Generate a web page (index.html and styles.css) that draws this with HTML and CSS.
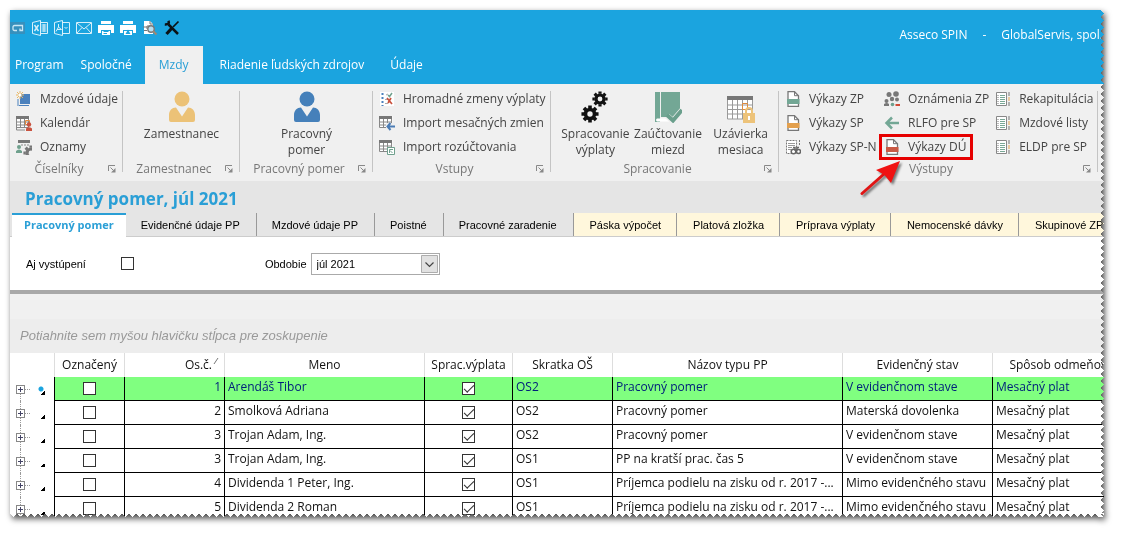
FILE: index.html
```html
<!DOCTYPE html>
<html lang="sk">
<head>
<meta charset="utf-8">
<title>Asseco SPIN</title>
<link rel="stylesheet" href="styles.css">
</head>
<body>
<svg class="defs" aria-hidden="true">
  <symbol id="doc" viewBox="0 0 16 16"><path d="M3 .7h6.500l4 4v10.600H3z" fill="#fff" stroke="#777" stroke-width="1.300"/><path d="M9.500.7v4h4" fill="none" stroke="#777"/><path d="M2 8h12.500v5H2z" fill="currentColor"/></symbol>
  <symbol id="list" viewBox="0 0 16 16"><path d="M1.500 1.500h10v13h-10z" fill="#fff" stroke="#888"/><path d="M5 4.500h5M5 6.500h5M5 8.500h5M5 10.500h5M5 12.500h5" stroke="#79a896"/><path d="M3 4v9" stroke="#777" stroke-dasharray="1 1"/><path d="M14 1v4" stroke="#777"/><path d="M14 6v4" stroke="#e8a34c"/><path d="M14 11v4" stroke="#777"/></symbol>
  <symbol id="launch" viewBox="0 0 8 8"><path d="M.5 6V.5H7" fill="none" stroke="#888"/><path d="M2.500 2.500l3 3" stroke="#888"/><path d="M7.500 3v4.500H3z" fill="#888"/></symbol>
  <symbol id="sheet" viewBox="0 0 16 16"><path d="M.5 1h13v12H.5z" fill="#fff"/><path d="M0 1h13v3H0z" fill="#777"/><path d="M.5 4v8.500h12V4M0 7h13M0 10h13M4.500 4v9M8.500 4v9" fill="none" stroke="#888"/></symbol>
  <symbol id="person" viewBox="0 0 28 32"><circle cx="14" cy="8" r="7.500"/><path d="M8 16.500l6 9 6-9c4 0 7 3 7 7.500V29q0 2-2 2H3q-2 0-2-2v-5c0-4.500 3-7.500 7-7.500z"/></symbol>
  <symbol id="gear" viewBox="-10 -10 20 20"><circle r="5" fill="none" stroke="currentColor" stroke-width="4"/><path d="M0-6.500V-9.500M0 6.500V9.500M-6.500 0H-9.500M6.500 0H9.500M-4.600-4.600l-2.100-2.100M4.600 4.600l2.100 2.100M-4.600 4.600l-2.100 2.100M4.600-4.600l2.100-2.100" stroke="currentColor" stroke-width="4"/></symbol>
  <symbol id="printer" viewBox="0 0 16 16"><path d="M3 1h10v3H3zM0 5h16v8h-3v-3H3v3H0z" fill="#fff"/><path d="M4 11h8v4H4z" fill="#fff"/></symbol>
</svg>

<div class="shadow">
<div class="window">
  <header class="top">
    <div class="titlebar">
      <div class="quick">
        <button aria-label="Aplikácia"><svg viewBox="0 0 16 16"><path d="M0 2h15v12H0z" fill="#3690bd"/><path d="M7 10.500H4.500Q3 10.500 3 9V7Q3 5.500 4.500 5.500h8v5H10V8.500" fill="none" stroke="#c9e7f5" stroke-width="1.300"/></svg></button>
        <button aria-label="Export do Excelu"><svg viewBox="0 0 16 16" fill="none" stroke="#d8f0fa"><path d="M.5 2.500l8-2v15l-8-2zM8.500 2.500h7v11h-7"/><path d="M2.500 5l4 6M6.500 5l-4 6" stroke-width="1.400"/><path d="M9.500 5h5M9.500 7h5M9.500 9h5M9.500 11h5M12 4v8"/></svg></button>
        <button aria-label="Export do PDF"><svg viewBox="0 0 16 16" fill="none" stroke="#d8f0fa"><path d="M.5 2.500l8-2v15l-8-2zM8.500 2.500h7v11h-7"/><path d="M4.500 4v3L2 11.500M4.500 7l3 2.500-4.500 0M10.500 7l1.500 1.500L13.500 7"/></svg></button>
        <button aria-label="Poslať poštou"><svg viewBox="0 0 16 16" fill="none" stroke="#d8f0fa"><path d="M.5 2.500h15v11H.5zM1 3l7 6 7-6M1 13l5-5.500M15 13l-5-5.500"/></svg></button>
        <button aria-label="Tlačiť"><svg viewBox="0 0 16 16"><use href="#printer"/><path d="M5.500 11.500h5M5.500 13.500h3.500M4 10.500h8" stroke="#1ba4df"/></svg></button>
        <button aria-label="Tlačiť zostavu"><svg viewBox="0 0 16 16"><use href="#printer"/><path d="M8 9.500l2.500 4.500h-5z" fill="#1ba4df"/></svg></button>
        <button aria-label="Náhľad tlače"><svg viewBox="0 0 16 16"><path d="M2 1h6l3 3v10H2z" fill="#fff"/><path d="M8 1v3h3" fill="none" stroke="#777"/><path d="M1 7h4M5 9V6h3M2 10.500h3" stroke="#777" fill="none"/><circle cx="9" cy="9" r="3.200" fill="#b9dff0" stroke="#777" stroke-width="1.400"/><path d="M11 11l3.500 3.500" stroke="#987" stroke-width="2.200"/></svg></button>
        <button aria-label="Nástroje"><svg viewBox="0 0 16 16" stroke="#0b1216" fill="none"><path d="M14.500 1.500L9 7" stroke-width="1.700"/><path d="M7.500 8.500L2.500 14" stroke-width="3.200"/><path d="M4.500 4.500l9.500 9.500" stroke-width="2.500"/><path d="M4.500.8q1.500 4-3.700 3.700" stroke-width="2.500"/></svg></button>
      </div>
      <div class="appname"><span>Asseco SPIN</span><span>-</span><span>GlobalServis, spol.</span></div>
    </div>
    <nav class="menu">
      <button>Program</button><button>Spoločné</button><button class="on">Mzdy</button><button>Riadenie ľudských zdrojov</button><button>Údaje</button>
    </nav>
  </header>

  <section class="ribbon">
    <div class="group">
      <div class="items small">
        <button><svg viewBox="0 0 16 16"><path d="M4 3h10v10H4z" fill="#4b81bd"/><path d="M2 8v7M3 14.500h10" stroke="#4b81bd" fill="none"/><path d="M4 0v8M0 4h8M1 1l6 6M7 1L1 7" stroke="#e9b765"/><circle cx="4" cy="4" r="1.500" fill="#fff"/></svg>Mzdové údaje</button>
        <button><svg viewBox="0 0 16 16"><use href="#sheet"/><path d="M.5 12v3H9" fill="none" stroke="#888"/><path d="M9.500 5.500h4v4h-4z" fill="none" stroke="#e0893c"/><circle cx="13" cy="9.500" r="2.200" fill="#c95340"/><path d="M10 16v-2.500q3-2.500 6 0V16z" fill="#c95340"/></svg>Kalendár</button>
        <button><svg viewBox="0 0 16 16"><path d="M2 1h12v3H2z" fill="#777"/><path d="M5 6h8" stroke="#888" stroke-dasharray="2 1"/><circle cx="3" cy="8" r="2" fill="#6fa08d"/><path d="M0 14v-2q3-3 6 0v2z" fill="#6fa08d"/><svg x="7" y="6" width="9" height="9" color="#777"><use href="#gear"/></svg></svg>Oznamy</button>
      </div>
      <div class="caption"><span>Číselníky</span><button aria-label="Viac"><svg><use href="#launch"/></svg></button></div>
    </div>
    <div class="group">
      <div class="items">
        <button class="big"><svg fill="#ecc277"><use href="#person"/></svg>Zamestnanec</button>
      </div>
      <div class="caption"><span>Zamestnanec</span><button aria-label="Viac"><svg><use href="#launch"/></svg></button></div>
    </div>
    <div class="group">
      <div class="items">
        <button class="big"><svg fill="#4580ba"><use href="#person"/></svg>Pracovný<br>pomer</button>
      </div>
      <div class="caption"><span>Pracovný pomer</span><button aria-label="Viac"><svg><use href="#launch"/></svg></button></div>
    </div>
    <div class="group">
      <div class="items small">
        <button><svg viewBox="0 0 16 16"><path d="M1 1h14v14H1z" fill="#fff"/><path d="M3.500 2v13" stroke="#4b81bd" stroke-width="2" stroke-dasharray="2 2"/><path d="M7 4l2-1M6 8.500h3M6 12.500h3" stroke="#aaa"/><path d="M9 4l1.500 1.500L13 2" stroke="#6fa08d" stroke-width="1.500" fill="none"/><path d="M8 7l5 6M12 7l-3 5" stroke="#c9503c" stroke-width="1.700"/></svg>Hromadné zmeny výplaty</button>
        <button><svg viewBox="0 0 16 16"><use href="#sheet"/><path d="M7 8h9v7H7z" fill="#f0f0f0"/><path d="M16 11.500H9M11.500 8L8.500 11.500l3 3.500" stroke="#4b7cb5" stroke-width="2" fill="none"/></svg>Import mesačných zmien</button>
        <button><svg viewBox="0 0 16 16"><use href="#sheet"/><path d="M8.500 8.500h7v7h-7z" fill="#fff" stroke="#6fa08d"/><path d="M13.500 14L11 11.500M10.500 14v-3.500H14" stroke="#6fa08d" fill="none"/></svg>Import rozúčtovania</button>
      </div>
      <div class="caption"><span>Vstupy</span><button aria-label="Viac"><svg><use href="#launch"/></svg></button></div>
    </div>
    <div class="group">
      <div class="items several">
        <button class="big"><svg viewBox="0 0 28 32" color="#111"><svg x="11" y="0" width="16" height="16"><use href="#gear"/></svg><svg x="0" y="14" width="18" height="18"><use href="#gear"/></svg></svg>Spracovanie<br>výplaty</button>
        <button class="big"><svg viewBox="0 0 28 32"><path d="M1 1h25v25H6v5H1z" fill="#73a795"/><path d="M6.500 1v25" stroke="#f0f0f0"/><path d="M3 27.500h13v3H3q-2-1.500 0-3z" fill="#fff"/><path d="M13 25l6 5L28.500 19" stroke="#f0f0f0" stroke-width="6" fill="none"/><path d="M13 24l6 5.500L28 19" stroke="#6a9f8c" stroke-width="4" fill="none"/></svg>Zaúčtovanie<br>miezd</button>
        <button class="big"><svg viewBox="0 0 28 32"><path d="M.5 5h25v23H.5z" fill="#fff"/><path d="M0 5h26v4H0z" fill="#777"/><path d="M.5 9v19H16M0 14h26M0 18.500h26M0 23h16M5.500 9v19M10.500 9v19M15.500 9v19M20.500 9v10M25.500 9v10" fill="none" stroke="#999"/><path d="M15.500 12.500h5v6h-5z" fill="none" stroke="#df8b3d"/><path d="M19 23v-3q0-3 3-3t3 3v3" fill="none" stroke="#edc37a" stroke-width="2"/><path d="M16 22h12v10H16z" fill="#edc37a"/><path d="M22 25v4" stroke="#fff" stroke-width="2"/></svg>Uzávierka<br>mesiaca</button>
      </div>
      <div class="caption"><span>Spracovanie</span><button aria-label="Viac"><svg><use href="#launch"/></svg></button></div>
    </div>
    <div class="group">
      <div class="items triple">
        <div class="small">
          <button><svg color="#73a795"><use href="#doc"/></svg>Výkazy ZP</button>
          <button><svg color="#e3a04e"><use href="#doc"/></svg>Výkazy SP</button>
          <button><svg viewBox="0 0 16 16"><path d="M1.500 1.500h10v13h-10z" fill="#fff" stroke="#777" stroke-dasharray="2 1"/><path d="M3 4.500h7M3 6.500h7M3 8.500h4M3 10.500h3" stroke="#999"/><path d="M14.500 1v5" stroke="#777" stroke-dasharray="2 1"/><circle cx="8.500" cy="12.500" r="2.300" fill="#fff" stroke="#666" stroke-width="1.500"/><circle cx="13.500" cy="12.500" r="2" fill="#fff" stroke="#666" stroke-width="1.500"/><path d="M8 8.500h2v3M12 11.500v-3h2" stroke="#666" fill="none" stroke-width="1.500"/></svg>Výkazy SP-N</button>
        </div>
        <div class="small">
          <button><svg viewBox="0 0 16 16" fill="#777"><circle cx="5" cy="3.500" r="2.500"/><circle cx="12" cy="3" r="2.800"/><circle cx="2.500" cy="10" r="2"/><circle cx="8" cy="8" r="2.200"/><circle cx="13" cy="8.500" r="2"/><path d="M0 15v-2q3-2 5 0v2z"/><circle cx="8.500" cy="13.500" r="1.800" fill="#6fa08d"/><path d="M11.500 13h4.500v2h-4.500z" fill="#d24a35"/></svg>Oznámenia ZP</button>
          <button><svg viewBox="0 0 16 16" fill="none" stroke="#73a795" stroke-width="2.500"><path d="M15 8H3M8 2.500L2.500 8 8 13.500"/></svg>RLFO pre SP</button>
          <button class="marked"><svg color="#c95a45"><use href="#doc"/></svg>Výkazy DÚ
            <svg class="arrow" viewBox="0 0 44 38"><path d="M2 34.500L24 15" stroke="#e01515" stroke-width="3" stroke-linecap="round"/><path d="M40 2L31 24l-6.500-8L16 11z" fill="#f01212"/></svg></button>
        </div>
        <div class="small">
          <button><svg><use href="#list"/></svg>Rekapitulácia</button>
          <button><svg><use href="#list"/></svg>Mzdové listy</button>
          <button><svg><use href="#list"/></svg>ELDP pre SP</button>
        </div>
      </div>
      <div class="caption"><span>Výstupy</span><button aria-label="Viac"><svg><use href="#launch"/></svg></button></div>
    </div>
  </section>

  <section class="heading">
    <h1>Pracovný pomer, júl 2021</h1>
    <nav class="tabs">
      <button class="on">Pracovný pomer</button><button>Evidenčné údaje PP</button><button>Mzdové údaje PP</button><button>Poistné</button><button>Pracovné zaradenie</button><button class="warm">Páska výpočet</button><button class="warm">Platová zložka</button><button class="warm">Príprava výplaty</button><button class="warm">Nemocenské dávky</button><button class="warm">Skupinové ZP</button>
    </nav>
  </section>

  <form class="filter">
    <label for="left">Aj vystúpení</label><input id="left" type="checkbox">
    <label for="period" class="period">Obdobie</label>
    <span class="combo"><select id="period"><option>júl 2021</option></select><svg viewBox="0 0 17 18"><path d="M.5.5h16v17H.5z" fill="#e1e1e1" stroke="#adadad"/><path d="M4.500 7.500l4 4 4-4" fill="none" stroke="#444" stroke-width="1.200"/></svg></span>
  </form>

  <div class="grouping">Potiahnite sem myšou hlavičku stĺpca pre zoskupenie</div>

  <table>
    <colgroup><col class="c0"><col class="c1"><col class="c2"><col class="c3"><col class="c4"><col class="c5"><col class="c6"><col class="c7"><col class="c8"></colgroup>
    <thead><tr><th></th><th>Označený</th><th class="num">Os.č.<svg viewBox="0 0 6 8"><path d="M1 7l4-6" stroke="#777"/></svg></th><th>Meno</th><th>Sprac.výplata</th><th>Skratka OŠ</th><th>Názov typu PP</th><th>Evidenčný stav</th><th>Spôsob odmeňovania</th></tr></thead>
    <tbody>
      <tr class="current"><td><button class="node" aria-label="Rozbaliť"></button></td><td class="mid"><input type="checkbox" aria-label="Označený"></td><td class="num">1</td><td>Arendáš Tibor</td><td class="mid"><input type="checkbox" checked aria-label="Sprac.výplata"></td><td>OS2</td><td>Pracovný pomer</td><td>V evidenčnom stave</td><td>Mesačný plat</td></tr>
      <tr><td><button class="node" aria-label="Rozbaliť"></button></td><td class="mid"><input type="checkbox" aria-label="Označený"></td><td class="num">2</td><td>Smolková Adriana</td><td class="mid"><input type="checkbox" checked aria-label="Sprac.výplata"></td><td>OS2</td><td>Pracovný pomer</td><td>Materská dovolenka</td><td>Mesačný plat</td></tr>
      <tr><td><button class="node" aria-label="Rozbaliť"></button></td><td class="mid"><input type="checkbox" aria-label="Označený"></td><td class="num">3</td><td>Trojan Adam, Ing.</td><td class="mid"><input type="checkbox" checked aria-label="Sprac.výplata"></td><td>OS2</td><td>Pracovný pomer</td><td>V evidenčnom stave</td><td>Mesačný plat</td></tr>
      <tr><td><button class="node" aria-label="Rozbaliť"></button></td><td class="mid"><input type="checkbox" aria-label="Označený"></td><td class="num">3</td><td>Trojan Adam, Ing.</td><td class="mid"><input type="checkbox" checked aria-label="Sprac.výplata"></td><td>OS1</td><td>PP na kratší prac. čas 5</td><td>V evidenčnom stave</td><td>Mesačný plat</td></tr>
      <tr><td><button class="node" aria-label="Rozbaliť"></button></td><td class="mid"><input type="checkbox" aria-label="Označený"></td><td class="num">4</td><td>Dividenda 1 Peter, Ing.</td><td class="mid"><input type="checkbox" checked aria-label="Sprac.výplata"></td><td>OS1</td><td>Príjemca podielu na zisku od r. 2017 -...</td><td>Mimo evidenčného stavu</td><td>Mesačný plat</td></tr>
      <tr><td><button class="node" aria-label="Rozbaliť"></button></td><td class="mid"><input type="checkbox" aria-label="Označený"></td><td class="num">5</td><td>Dividenda 2 Roman</td><td class="mid"><input type="checkbox" checked aria-label="Sprac.výplata"></td><td>OS1</td><td>Príjemca podielu na zisku od r. 2017 -...</td><td>Mimo evidenčného stavu</td><td>Mesačný plat</td></tr>
    </tbody>
  </table>
</div>
</div>
</body>
</html>
```
FILE: styles.css
```css
* { box-sizing: border-box; }
body { margin: 0; background: #fff; font: 12px/16px "Open Sans", "Noto Sans", sans-serif; color: #222; overflow: hidden; }
button { border: 0; margin: 0; padding: 0; background: none; font: inherit; color: inherit; white-space: nowrap; }
svg { display: block; flex: none; }
.defs { display: none; }

.shadow { padding: 10px 17px 17px 10px; filter: drop-shadow(2px 3px 3px rgba(0, 0, 0, .75)); }
.window {
  height: calc(100vh - 27px); overflow: hidden; background: #f0f0f0;
  display: flex; flex-direction: column;
  -webkit-mask:
    linear-gradient(#000 0 0) left top / calc(100% - 5px) calc(100% - 4px) no-repeat,
    conic-gradient(from 225deg at 100% 50%, #000 90deg, transparent 0) right top / 5px 7px repeat-y,
    conic-gradient(from -45deg at 50% 100%, #000 90deg, transparent 0) left bottom / 7px 4px repeat-x;
}
.window > * { flex: none; }

.top { background: #1ba4df; color: #fff; }
.titlebar { display: flex; justify-content: space-between; align-items: flex-start; height: 36px; padding-top: 10px; }
.quick { display: flex; gap: 6px; }
.quick svg { width: 16px; height: 16px; }
.appname { display: flex; gap: 15px; padding: 7px 1px 0 0; }
.menu { display: flex; height: 38px; }
.menu button { padding: 0 13px; }
.menu button:first-child { padding: 0 4px 0 5px; }
.menu .on { background: #f0f0f0; color: #2a9fd6; padding: 0 14px; margin-right: 4px; }

.ribbon { display: grid; grid-template-columns: 113fr 117fr 133fr 178fr 228fr 319fr 6fr; padding: 7px 0 4px; height: 97px; color: #444; }
.group { background: linear-gradient(#c4c4c4 0 0) right top / 1px 81px no-repeat; display: flex; flex-direction: column; justify-content: space-between; height: 86px; min-width: 0; }
.items { display: flex; justify-content: center; height: 66px; }
.small { display: flex; flex-direction: column; align-items: flex-start; justify-content: flex-start; padding-left: 6px; margin-top: -4px; }
.small button { display: flex; align-items: center; gap: 8px; height: 24px; flex: none; }
.small svg { width: 16px; height: 16px; }
.triple { display: grid; grid-template-columns: 102fr 105fr 112fr; }
.several { padding: 0 2px 0 8px; }
.big { display: flex; flex-direction: column; align-items: center; flex: 1; }
.big > svg { width: 28px; height: 32px; margin-bottom: 3px; }
.caption { display: flex; align-items: center; height: 16px; color: #777; padding-right: 7px; }
.caption span { flex: 1; text-align: center; }
.caption svg { width: 8px; height: 8px; }
.small .marked { position: relative; outline: 3px solid #e60000; outline-offset: -2px; padding: 0 6px 0 4px; margin-left: -4px; }
.small .arrow { position: absolute; left: -20px; top: 24px; width: 44px; height: 38px; filter: drop-shadow(2px 2px 1px rgba(0, 0, 0, .5)); }

.heading { background: #e5e5e5; font-family: "Liberation Sans", Arial, sans-serif; }
h1 { margin: 0; padding: 6px 15px 2px; font: bold 17px/24px "Open Sans", "Noto Sans", sans-serif; color: #2a9fd6; }
.tabs { display: flex; height: 24px; border-bottom: 1px solid #ccc; padding-left: 2px; font-size: 11px; color: #000; }
.tabs button { flex: none; height: 23px; padding: 0 16px 0 15px; border-right: 1px solid #999; }
.tabs .on { height: 24px; padding: 0 12px 3px; border-right: 0; border-top: 2px solid #2a9fd6; background: #fff; color: #2a9fd6; font: bold 11px "Open Sans", "Noto Sans", sans-serif; }
.tabs .warm { background: #fff7dc; padding: 0 15px 0 16px; }

input[type="checkbox"] { appearance: none; margin: 0; width: 13px; height: 13px; border: 1px solid #333; background: #fff; display: block; }
input[type="checkbox"]:checked::after { content: ""; display: block; width: 9px; height: 4px; margin: 2px 0 0 1px; border: solid #333; border-width: 0 0 1px 1px; transform: rotate(-45deg); }
.filter { display: flex; align-items: center; height: 57px; background: #fff; border-bottom: 4px solid #a8a8a8; padding-left: 16px; font: 11px/16px "Liberation Sans", Arial, sans-serif; color: #000; }
.filter input { margin-left: 35px; }
.period { margin: 0 4px 0 131px; }
.combo { position: relative; }
.combo select { appearance: none; display: block; width: 129px; height: 22px; border: 1px solid #aaa; border-radius: 0; background: #fff; padding: 0 5px; font: inherit; color: inherit; }
.combo svg { position: absolute; right: 2px; top: 2px; width: 17px; height: 18px; pointer-events: none; }

.grouping { margin-top: 25px; height: 34px; padding: 8px 10px; background: #ededed; font: italic 13px/18px "Liberation Sans", Arial, sans-serif; color: #999; white-space: nowrap; }

table { width: 1138px; table-layout: fixed; border-collapse: separate; border-spacing: 0; background: #fff; color: #111; }
.c0 { width: 45px; } .c1 { width: 70px; } .c2 { width: 100px; } .c3 { width: 200px; } .c4 { width: 88px; }
.c5 { width: 100px; } .c6 { width: 230px; } .c7 { width: 150px; } .c8 { width: 155px; }
th { height: 24px; padding: 0 3px; border-right: 1px solid #ddd; font-weight: 400; white-space: nowrap; }
th svg { display: inline-block; width: 6px; height: 8px; margin: 0 2px 4px 1px; }
td { height: 24px; padding: 0 3px 4px; border: solid #000; border-width: 0 1px 1px 0; line-height: 16px; white-space: nowrap; overflow: hidden; }
td:first-child { border-bottom: 0; padding: 0; position: relative; }
td:first-child::before { content: ""; position: absolute; left: 10px; top: 0; height: 24px; width: 10px; border-left: 1px dotted #999; background: linear-gradient(90deg, #999 50%, transparent 0) 0 12px / 2px 1px repeat-x; }
.current td:first-child::before { top: 12px; height: 12px; background-position: 0 0; }
td:first-child::after { content: ""; position: absolute; left: 31px; top: 14px; border: solid; border-width: 4px 0 0 4px; border-color: transparent; background: linear-gradient(135deg, transparent 50%, #000 0) border-box; }
.node { position: relative; z-index: 1; display: block; width: 9px; height: 9px; margin: 1px 0 0 6px; border: 1px solid #888; background: linear-gradient(#446, #446) center / 5px 1px no-repeat, linear-gradient(#446, #446) center / 1px 5px no-repeat, #fff; }
.num { text-align: right; }
.mid { padding: 0; }
.mid input { margin: 0 auto; }
.current td { background: #80ff80; color: #00207a; }
.current td:first-child { background: radial-gradient(circle at 31px 12px, #1ba4df 2px, transparent 3px) #fff; }
```
